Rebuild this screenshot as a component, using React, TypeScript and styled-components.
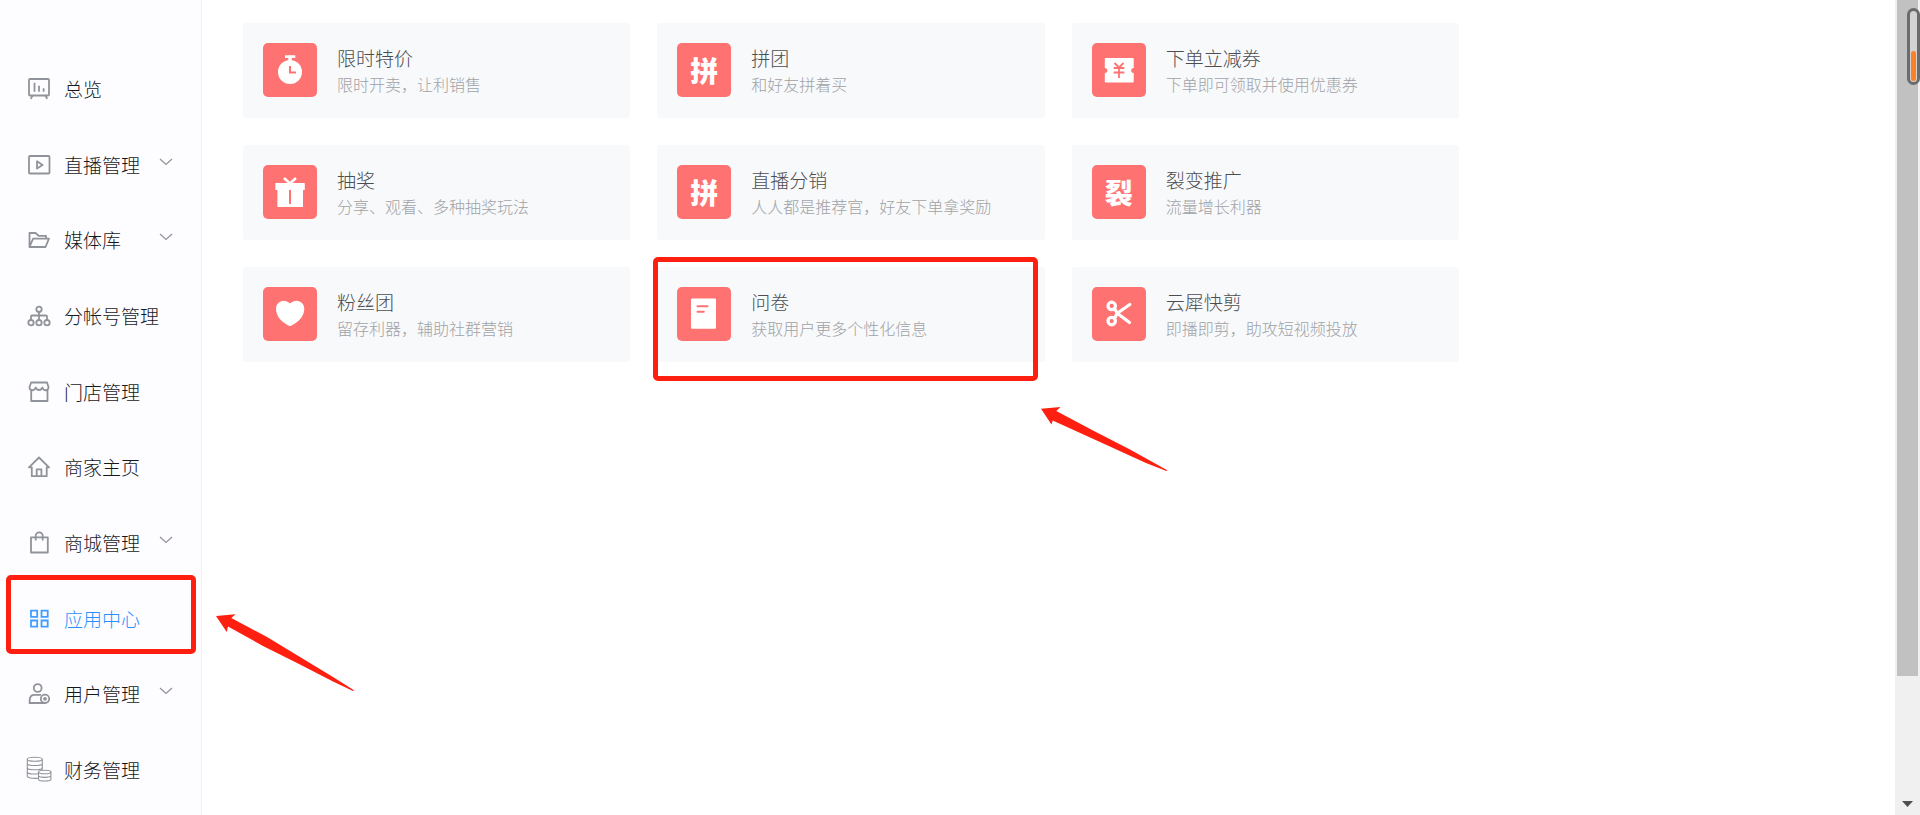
import React from "react";
import styled, { createGlobalStyle } from "styled-components";

const GlobalStyle = createGlobalStyle`
  * { box-sizing: border-box; }
  body {
    margin: 0;
    background: #ffffff;
    font-family: "Noto Sans CJK SC", "Noto Sans", sans-serif;
    font-weight: 300;
  }
`;

const MARK_RED = "#ff1f10";
const TILE_RED = "#ff7272";

const Page = styled.div`
  display: flex;
  min-height: 100vh;
`;

const Sidebar = styled.nav`
  flex: none;
  width: 202px;
  display: flex;
  padding: 51px 0 7px;
  background: #fdfdff;
  border-right: 1px solid #f1f1f4;
`;

const NavList = styled.ul`
  flex: 1;
  display: grid;
  grid-auto-rows: minmax(56px, 1fr);
  margin: 0;
  padding: 0;
  list-style: none;
`;

const NavItem = styled.li`
  position: relative;
  display: flex;
`;

const NavLink = styled.a<{ $active?: boolean }>`
  flex: 1;
  display: flex;
  align-items: center;
  gap: 13px;
  padding: 0 28px 0 27px;
  font-size: 19px;
  line-height: 28px;
  color: ${(p) => (p.$active ? "#2a90ff" : "#16181b")};
  text-decoration: none;
  white-space: nowrap;
`;

const NavIcon = styled.svg<{ $active?: boolean }>`
  flex: none;
  width: 24px;
  height: 24px;
  overflow: visible;
  fill: none;
  stroke: ${(p) => (p.$active ? "#409eff" : "#909399")};
  stroke-width: 1.8;
`;

const Chevron = styled.svg`
  width: 14px;
  height: 20px;
  margin-left: auto;
  fill: none;
  stroke: #909399;
  stroke-width: 1.2;
`;

const Main = styled.main`
  flex: 1;
  min-width: 0;
  padding: 23px 41px;
`;

const CardGrid = styled.div`
  display: grid;
  grid-template-columns: repeat(3, minmax(0, 1fr));
  gap: 27px;
  max-width: 1216px;
`;

const CardCell = styled.div`
  position: relative;
  display: flex;
`;

const Card = styled.a`
  flex: 1;
  min-width: 0;
  display: flex;
  align-items: center;
  gap: 20px;
  min-height: 95px;
  padding: 0 20px 1px;
  border-radius: 3px;
  background: #f8f9fb;
  text-decoration: none;
`;

const Tile = styled.span`
  flex: none;
  width: 54px;
  height: 54px;
  display: flex;
  align-items: center;
  justify-content: center;
  border-radius: 5px;
  background: ${TILE_RED};
  color: #ffffff;
  font-size: 28px;
  line-height: 54px;
  font-weight: 900;
`;

const TileIcon = styled.svg`
  width: 54px;
  height: 54px;
  fill: #ffffff;
`;

const CardText = styled.span`
  min-width: 0;
  display: flex;
  flex-direction: column;
`;

const CardTitle = styled.span`
  font-size: 19px;
  line-height: 28px;
  color: #4b4d50;
`;

const CardNote = styled.span`
  font-size: 16px;
  line-height: 24px;
  color: #a0a2a5;
`;

const NavMark = styled.span`
  position: absolute;
  top: -6px;
  left: 6px;
  right: 5px;
  height: 79px;
  border: 5px solid ${MARK_RED};
  border-radius: 5px;
  pointer-events: none;
`;

const CardMark = styled.span`
  position: absolute;
  top: -10px;
  left: -4px;
  right: 7px;
  height: 124px;
  border: 5px solid ${MARK_RED};
  border-radius: 5px;
  pointer-events: none;
`;

const NavArrow = styled.svg`
  position: absolute;
  top: 33px;
  left: 216px;
  width: 140px;
  height: 80px;
  fill: ${MARK_RED};
  pointer-events: none;
`;

const CardArrow = styled.svg`
  position: absolute;
  top: 139px;
  left: calc(100% - 4px);
  width: 128px;
  height: 68px;
  fill: ${MARK_RED};
  pointer-events: none;
`;

const ScrollRail = styled.div`
  position: relative;
  flex: none;
  width: 25px;
  display: flex;
  flex-direction: column;
  justify-content: space-between;
  align-items: center;
  padding: 0 2px 8px;
  background: #f0f0f0;
`;

const ScrollThumb = styled.div`
  width: 21px;
  height: 83vh;
  background: #c1c1c1;
`;

const ScrollArrow = styled.svg`
  width: 11px;
  height: 6px;
  fill: #505050;
`;

const Gauge = styled.div`
  position: absolute;
  top: 8px;
  right: 0;
  width: 13px;
  height: 77px;
  display: flex;
  align-items: flex-end;
  justify-content: center;
  padding-bottom: 1px;
  border: 3px solid #6b6b6b;
  border-radius: 7px;
  background: #d3d3d3;
`;

const GaugeLevel = styled.div`
  width: 5px;
  height: 30px;
  border-radius: 3px;
  background: #ff7f27;
`;

type NavEntry = {
  label: string;
  icon: React.ReactNode;
  expandable?: boolean;
  active?: boolean;
};

const navEntries: NavEntry[] = [
  {
    label: "总览",
    icon: (
      <>
        <rect x="2" y="2" width="20" height="16.5" rx="1" />
        <path d="M7.5 5.7v9M12 8.7v6M16.6 11.3v3.4M5.5 18.5L3.8 21.8M18.5 18.5l1.7 3.3" />
      </>
    ),
  },
  {
    label: "直播管理",
    expandable: true,
    icon: (
      <>
        <rect x="2" y="3" width="20.5" height="17.5" rx="1" />
        <path d="M10 8.3v7.2l5.6-3.6z" strokeLinejoin="round" />
      </>
    ),
  },
  {
    label: "媒体库",
    expandable: true,
    icon: (
      <path
        d="M2.5 19V5h6l3.2 2.8h7.3v2.7M2.5 19l3.6-8.4H22L18.5 19z"
        strokeLinejoin="round"
      />
    ),
  },
  {
    label: "分帐号管理",
    icon: (
      <>
        <circle cx="12" cy="5.3" r="2.7" />
        <circle cx="4" cy="18.7" r="2.7" />
        <circle cx="12" cy="18.7" r="2.7" />
        <circle cx="20" cy="18.7" r="2.7" />
        <path d="M12 8v8M4 16v-3.5q0-1 1-1h14q1 0 1 1V16" />
      </>
    ),
  },
  {
    label: "门店管理",
    icon: (
      <path
        d="M4.2 2.5h15.8l1.5 4.5c0 4-4.6 4.5-6.1.5c-.8 3.3-5.8 3.3-6.7 0c-1.5 4-6.2 3.5-6.2-.5zM4.2 10.2v10.8h16.3V10.2"
        strokeLinejoin="round"
      />
    ),
  },
  {
    label: "商家主页",
    icon: (
      <path
        d="M4.8 12.3H2L12 2.5l10 9.8h-2.3v8.9H4.8zM9.7 21v-6.7h4.7V21"
        strokeLinejoin="round"
      />
    ),
  },
  {
    label: "商城管理",
    expandable: true,
    icon: (
      <path
        d="M4 6.3h16.8v15.2H4zM8.7 9.5V4.8a3.5 3.5 0 0 1 7 0v4.7"
        strokeLinejoin="round"
      />
    ),
  },
  {
    label: "应用中心",
    active: true,
    icon: (
      <path d="M4 3.7h6.2v6.2H4zM14.5 3.7h6.2v6.2h-6.2zM4 13.5h6.2v6.2H4zM14.5 13.5h6.2v6.2h-6.2z" />
    ),
  },
  {
    label: "用户管理",
    expandable: true,
    icon: (
      <>
        <circle cx="10.7" cy="6" r="3.9" />
        <path d="M14 12.8H7.5q-4.3 0-4.8 4.5V21H18" />
        <circle cx="18" cy="16.8" r="4.2" />
        <circle cx="18" cy="16.8" r="1" />
      </>
    ),
  },
  {
    label: "财务管理",
    icon: (
      <g strokeWidth="1.1">
        <ellipse cx="7.8" cy="1.3" rx="7.5" ry="2" />
        <path d="M.3 1.3v17c0 1.5 4 2.3 10.7 2M15.3 1.3v10.5M.3 5.5c0 2.7 15 2.7 15 0M.3 9.7c0 2.7 15 2.7 15 0M.3 14c0 2 5 2.3 10.7 1.8" />
        <ellipse cx="17.7" cy="14" rx="6.2" ry="1.8" />
        <path d="M11.5 14v7.3c0 2.3 12.4 2.3 12.4 0V14M11.5 17.6c0 2.3 12.4 2.3 12.4 0" />
      </g>
    ),
  },
];

type AppEntry = {
  title: string;
  note: string;
  glyph?: string;
  icon?: React.ReactNode;
  marked?: boolean;
};

const appEntries: AppEntry[] = [
  {
    title: "限时特价",
    note: "限时开卖，让利销售",
    icon: (
      <>
        <circle cx="27" cy="29" r="12" />
        <path d="M22 12.3h10.3V15h-3.6v3h-3.4v-3H22z" />
        <path d="M27 23v6.5h6" fill="none" stroke={TILE_RED} strokeWidth="2" />
      </>
    ),
  },
  { title: "拼团", note: "和好友拼着买", glyph: "拼" },
  {
    title: "下单立减券",
    note: "下单即可领取并使用优惠券",
    icon: (
      <>
        <path d="M13.5 15h27.5q.7 0 .7.7v9.3a2.5 2.5 0 0 0 0 5v8.7q0 .7-.7.7H13.5q-.7 0-.7-.7V30a2.5 2.5 0 0 0 0-5v-9.3q0-.7.7-.7z" />
        <path
          d="M22.5 20l4.5 4.5 4.5-4.500M21.7 25h10.6M21.7 29.5h10.6M27 24.5V35"
          fill="none"
          stroke={TILE_RED}
          strokeWidth="1.8"
        />
      </>
    ),
  },
  {
    title: "抽奖",
    note: "分享、观看、多种抽奖玩法",
    icon: (
      <>
        <path d="M13 18h28.2q.6 0 .6.6V25H40v16.5q0 .6-.6.6H15q-.6 0-.6-.6V25h-2V18.6q0-.6.6-.6z" />
        <path d="M21 13l6 5.5 6-5.5" fill="none" stroke="#ffffff" strokeWidth="2.5" />
        <path d="M27 25v14" stroke={TILE_RED} strokeWidth="2" />
      </>
    ),
  },
  { title: "直播分销", note: "人人都是推荐官，好友下单拿奖励", glyph: "拼" },
  { title: "裂变推广", note: "流量增长利器", glyph: "裂" },
  {
    title: "粉丝团",
    note: "留存利器，辅助社群营销",
    icon: (
      <path d="M27 16.5c2-2 4.3-2.8 6.5-2.8c4.5 0 7.8 3.6 7.8 8.3c0 8.5-7.8 14.3-14.3 17.2C20.5 36.3 13 30.5 13 22c0-4.7 3.3-8.3 7.5-8.3c2.2 0 4.5.8 6.5 2.8z" />
    ),
  },
  {
    title: "问卷",
    note: "获取用户更多个性化信息",
    marked: true,
    icon: (
      <>
        <rect x="14" y="11.5" width="25" height="30.2" rx="1" />
        <path
          d="M20.5 19.3h10M20.5 24.7h6.3"
          stroke={TILE_RED}
          strokeWidth="2"
          strokeLinecap="round"
        />
      </>
    ),
  },
  {
    title: "云犀快剪",
    note: "即播即剪，助攻短视频投放",
    icon: (
      <g fill="none" stroke="#ffffff" strokeWidth="3.2" strokeLinecap="round">
        <circle cx="19.7" cy="18.9" r="3.7" />
        <circle cx="19.7" cy="34.1" r="3.7" />
        <path d="M22.5 21.5l2.7 4.7L37.8 17.5M22.5 31.500l2.700-5.300L37.5 35.5" />
      </g>
    ),
  },
];

export default function App() {
  return (
    <>
      <GlobalStyle />
      <Page>
        <Sidebar>
          <NavList>
            {navEntries.map((entry) => (
              <NavItem key={entry.label}>
                <NavLink
                  href="#"
                  $active={entry.active}
                  aria-current={entry.active ? "page" : undefined}
                >
                  <NavIcon viewBox="0 0 24 24" $active={entry.active} aria-hidden="true">
                    {entry.icon}
                  </NavIcon>
                  {entry.label}
                  {entry.expandable && (
                    <Chevron viewBox="0 0 14 20" aria-hidden="true">
                      <path d="M1 4l6 5.5L13 4" />
                    </Chevron>
                  )}
                </NavLink>
                {entry.active && (
                  <>
                    <NavMark />
                    <NavArrow viewBox="0 0 140 80" aria-hidden="true">
                      <path d="M0 2L19.5 .3L15.3 4L51 23L84 43L117 63L138 76.3L137 77L117 67.5L84 50.5L47 32L12 12.5L10.7 18Z" />
                    </NavArrow>
                  </>
                )}
              </NavItem>
            ))}
          </NavList>
        </Sidebar>
        <Main>
          <CardGrid>
            {appEntries.map((app) => (
              <CardCell key={app.title}>
                <Card href="#">
                  <Tile aria-hidden="true">
                    {app.glyph ?? <TileIcon viewBox="0 0 54 54">{app.icon}</TileIcon>}
                  </Tile>
                  <CardText>
                    <CardTitle>{app.title}</CardTitle>
                    <CardNote>{app.note}</CardNote>
                  </CardText>
                </Card>
                {app.marked && (
                  <>
                    <CardMark />
                    <CardArrow viewBox="0 0 128 68" aria-hidden="true">
                      <path d="M0 2.8L19.500 1L15.3 5L52 24.5L89 43.500L126.300 64.300L125.500 65L105 57L59 36L11.700 14.500L10.500 18.500Z" />
                    </CardArrow>
                  </>
                )}
              </CardCell>
            ))}
          </CardGrid>
        </Main>
        <ScrollRail aria-hidden="true">
          <ScrollThumb />
          <ScrollArrow viewBox="0 0 11 6">
            <path d="M0 0h11L5.5 6z" />
          </ScrollArrow>
          <Gauge>
            <GaugeLevel />
          </Gauge>
        </ScrollRail>
      </Page>
    </>
  );
}
